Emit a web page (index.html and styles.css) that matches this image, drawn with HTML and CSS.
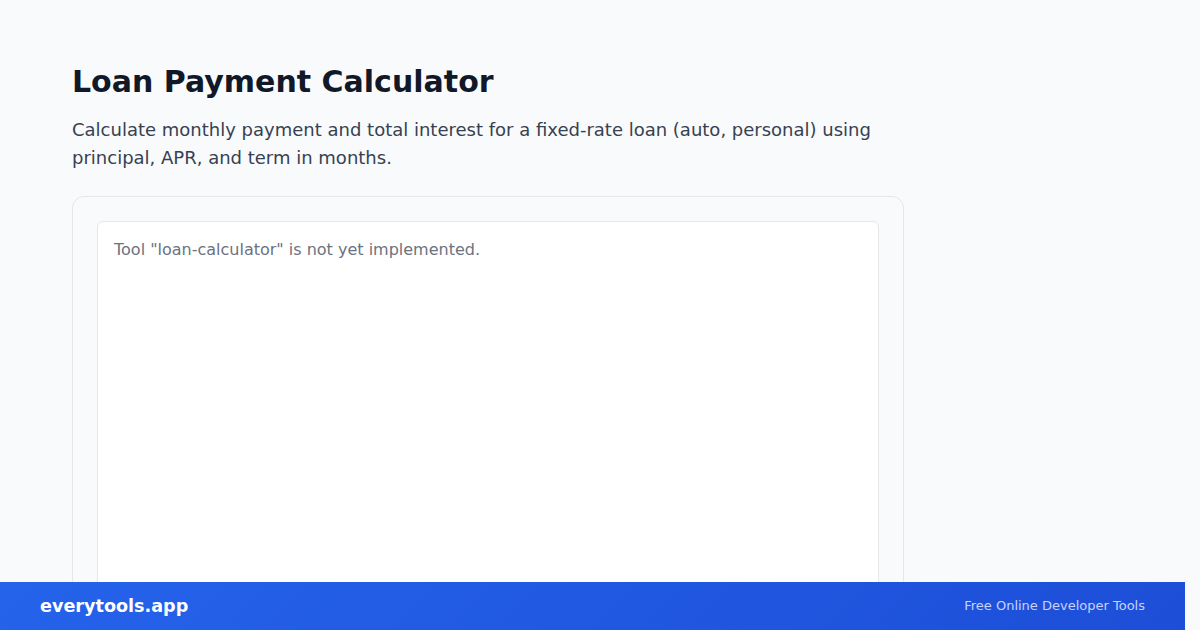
FILE: index.html
```html
<!DOCTYPE html>
<html lang="en">

<head>
          <meta charset="UTF-8">
          <meta name="viewport" content="width=device-width, initial-scale=1.0">
          <title>Loan Payment Calculator</title>
          <link rel="stylesheet" href="styles.css">
</head>

<body>
          <main class="page">
                    <h1 class="title">Loan Payment Calculator</h1>
                    <p class="lead">Calculate monthly payment and total interest for a fixed-rate loan (auto, personal) using principal, APR, and term in months.</p>
                    <section class="card">
                              <div class="tool">
                                        <p class="placeholder">Tool "loan-calculator" is not yet implemented.</p>
                              </div>
                    </section>
          </main>
          <footer class="footer">
                    <span class="brand">everytools.app</span>
                    <span class="tagline">Free Online Developer Tools</span>
          </footer>
</body>

</html>
```

FILE: styles.css
```css
html,
body {
          margin: 0;
          height: 100%;
          overflow: hidden;
}

body {
          background-color: #f8fafc;
          font-family: "DejaVu Sans", sans-serif;
          color: #111827;
}

.page {
          width: 832px;
          padding: 64px 0 0 72px;
}

.title {
          margin: 0;
          font-size: 30px;
          line-height: 36px;
          font-weight: bold;
          color: #111827;
}

.lead {
          margin: 16px 0 24px;
          font-size: 18px;
          line-height: 28px;
          color: #374151;
          padding-right: 20px;
}

.card {
          background-color: #f9fafb;
          border: 1px solid #e5e7eb;
          border-radius: 12px;
          padding: 24px;
          height: 500px;
}

.tool {
          background-color: #ffffff;
          border: 1px solid #e5e7eb;
          border-radius: 6px;
          padding: 16px;
          height: 460px;
}

.placeholder {
          margin: 0;
          font-size: 16px;
          line-height: 24px;
          color: #6b7280;
}

.footer {
          position: fixed;
          left: 0;
          bottom: 0;
          width: 1185px;
          height: 48px;
          box-sizing: border-box;
          padding: 0 40px;
          display: flex;
          align-items: center;
          justify-content: space-between;
          background: linear-gradient(135deg, #2563eb, #1d4ed8);
}

.brand {
          font-size: 17.6px;
          font-weight: bold;
          color: #ffffff;
}

.tagline {
          font-size: 13px;
          color: #c7d2fe;
          margin-top: -1px;
}
```
